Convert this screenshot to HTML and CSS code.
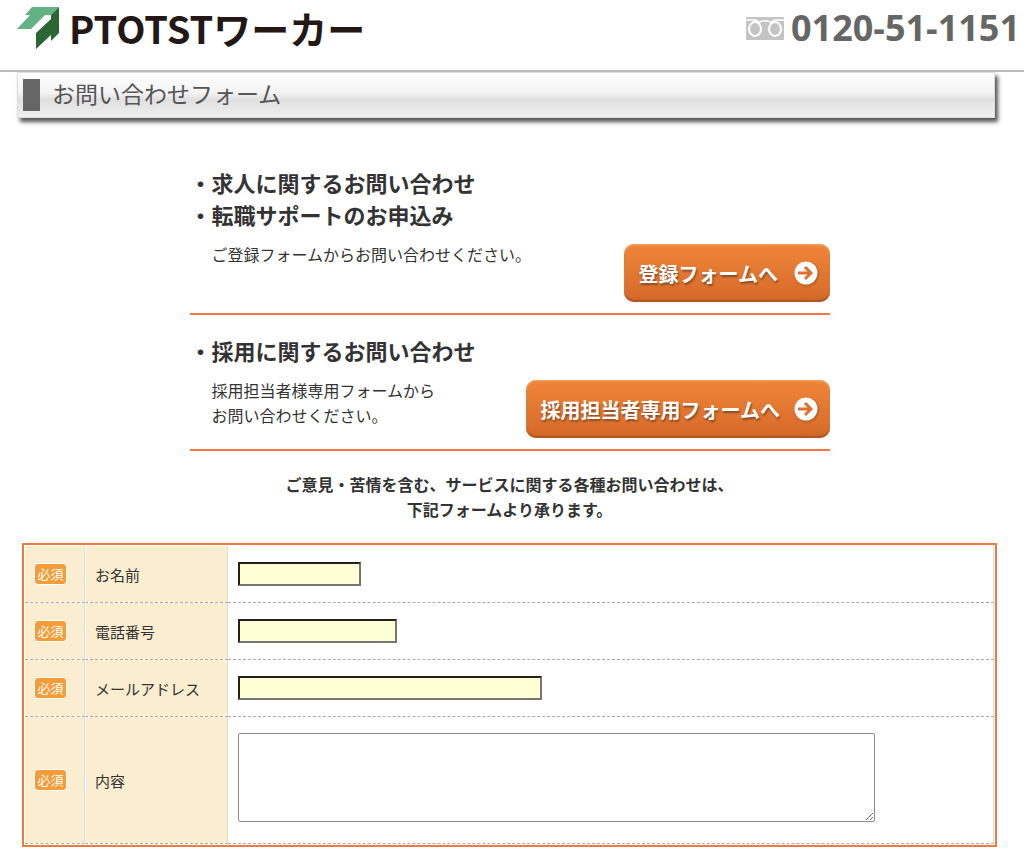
FILE: index.html
```
<!DOCTYPE html>
<html lang="ja">
<head>
    <meta charset="UTF-8">
    <meta name="viewport" content="width=device-width, initial-scale=1.0">
    <title>お問い合わせフォーム | PTOTSTワーカー</title>
    <link rel="stylesheet" href="styles.css">
</head>
<body>
    <header class="site-header">
        <a class="logo" href="#">
            <svg class="logo-mark" viewBox="0 0 43 43" aria-hidden="true">
                <path fill="#62b283" d="M0 22L13 8H8L15 0H42L34 8H28L14 22Z"/>
                <path fill="#2a6732" d="M42 0V26L34 34V28L19 42V26L34 12V8Z"/>
            </svg>
            <span>PTOTSTワーカー</span>
        </a>
        <div class="tel">
            <svg class="tel-mark" viewBox="0 0 38 23" aria-hidden="true">
                <rect width="38" height="23" fill="#c4c4c4"/>
                <g fill="none" stroke="#fff" stroke-width="2">
                    <ellipse cx="9" cy="12" rx="6" ry="7"/>
                    <ellipse cx="29" cy="12" rx="6" ry="7"/>
                    <path stroke-width="1.5" d="M0 3H8C10 3 12 4 13 6C15 3 23 3 25 6C26 4 28 3 30 3H38"/>
                </g>
            </svg>
            <span>0120-51-1151</span>
        </div>
    </header>

    <h1 class="page-title">お問い合わせフォーム</h1>

    <main>
        <div class="guide">
            <section class="guide-item">
                <h2>・求人に関するお問い合わせ<br>・転職サポートのお申込み</h2>
                <div class="guide-row">
                    <p>ご登録フォームからお問い合わせください。</p>
                    <a class="btn" href="#">
                        <span>登録フォームへ</span>
                        <svg viewBox="0 0 24 24" aria-hidden="true">
                            <circle cx="12" cy="12" r="11.5" fill="#fff"/>
                            <path fill="none" stroke="#dc7130" stroke-width="3" d="M4 12H17M11 6L17 12L11 18"/>
                        </svg>
                    </a>
                </div>
            </section>
            <section class="guide-item">
                <h2>・採用に関するお問い合わせ</h2>
                <div class="guide-row">
                    <p>採用担当者様専用フォームから<br>お問い合わせください。</p>
                    <a class="btn btn-wide" href="#">
                        <span>採用担当者専用フォームへ</span>
                        <svg viewBox="0 0 24 24" aria-hidden="true">
                            <circle cx="12" cy="12" r="11.5" fill="#fff"/>
                            <path fill="none" stroke="#dc7130" stroke-width="3" d="M4 12H17M11 6L17 12L11 18"/>
                        </svg>
                    </a>
                </div>
            </section>
        </div>

        <p class="lead">ご意見・苦情を含む、サービスに関する各種お問い合わせは、<br>下記フォームより承ります。</p>

        <form>
            <table class="form-table">
                <tr>
                    <td class="req"><span class="badge">必須</span></td>
                    <th><label for="name">お名前</label></th>
                    <td><input class="w-name" type="text" id="name"></td>
                </tr>
                <tr>
                    <td class="req"><span class="badge">必須</span></td>
                    <th><label for="tel">電話番号</label></th>
                    <td><input class="w-tel" type="tel" id="tel"></td>
                </tr>
                <tr>
                    <td class="req"><span class="badge">必須</span></td>
                    <th><label for="email">メールアドレス</label></th>
                    <td><input class="w-email" type="email" id="email"></td>
                </tr>
                <tr class="row-body">
                    <td class="req"><span class="badge">必須</span></td>
                    <th><label for="body">内容</label></th>
                    <td><textarea id="body"></textarea></td>
                </tr>
            </table>
        </form>
    </main>
</body>
</html>
```

FILE: styles.css
```
* {
    box-sizing: border-box;
}
body {
    margin: 0;
    background-color: #fff;
    color: #333;
    font-family: "Noto Sans CJK JP", sans-serif;
    font-size: 16px;
    line-height: 25px;
}
h1, h2, p {
    margin: 0;
}
.site-header {
    display: flex;
    justify-content: space-between;
    align-items: center;
    height: 72px;
    padding: 0 4px 14px 17px;
    border-bottom: 2px solid #bcbcbc;
}
.logo {
    display: flex;
    align-items: center;
    gap: 9px;
    color: #231815;
    font-size: 38px;
    font-weight: bold;
    line-height: 40px;
    text-decoration: none;
}
.logo span {
    padding-bottom: 1px;
}
.logo-mark {
    width: 43px;
    height: 43px;
}
.tel {
    display: flex;
    align-items: center;
    gap: 7px;
    color: #666;
    font-family: "Open Sans", sans-serif;
    font-size: 36px;
    font-weight: bold;
    line-height: 40px;
}
.tel-mark {
    width: 38px;
    height: 23px;
}
.page-title {
    display: flex;
    align-items: flex-start;
    gap: 12px;
    height: 46px;
    margin: 0 29px 0 17px;
    padding-left: 5px;
    border: 1px solid #ddd;
    background: linear-gradient(#fff, #f3f3f3 45%, #e0e0e0 60%, #efefef);
    box-shadow: 3px 4px 4px #555;
    color: #555;
    font-size: 23px;
    font-weight: normal;
    line-height: 41px;
}
.page-title::before {
    content: "";
    width: 17px;
    height: 32px;
    margin-top: 6px;
    background-color: #666;
}
main {
    padding: 48px 27px 4px 22px;
}
.guide {
    max-width: 640px;
    margin: 0 auto;
}
.guide-item {
    margin-bottom: 19px;
    padding-bottom: 11px;
    border-bottom: 2px solid #ee7a3e;
}
.guide-item h2 {
    margin-bottom: 12px;
    font-size: 22px;
    line-height: 32px;
}
.guide-row {
    display: flex;
    justify-content: space-between;
    align-items: flex-start;
    padding-left: 22px;
}
.btn {
    display: flex;
    justify-content: space-between;
    align-items: center;
    width: 206px;
    height: 58px;
    margin-top: 2px;
    padding: 0 12px 0 15px;
    border-radius: 10px;
    background: linear-gradient(#f08639, #d56829);
    box-shadow: inset 0 1px 2px #f6a868, inset 0 -2px 2px #a9521f;
    color: #fff;
    font-size: 20px;
    font-weight: bold;
    text-decoration: none;
    text-shadow: 1px 2px 2px #8a4a20;
}
.btn-wide {
    width: 304px;
}
.btn svg {
    width: 24px;
    height: 24px;
    filter: drop-shadow(1px 1px 1px #a9521f);
}
.lead {
    margin-bottom: 21px;
    padding-top: 2px;
    font-weight: bold;
    text-align: center;
}
.form-table {
    width: 100%;
    padding: 1px;
    border: 2px solid #ee7a3e;
    border-spacing: 0;
    font-size: 15px;
}
.form-table td, .form-table th {
    height: 57px;
    padding: 0 10px;
    border-right: 1px solid #ddd;
    border-bottom: 1px dashed #aaa;
    text-align: left;
    vertical-align: middle;
}
.form-table th {
    width: 143px;
    padding-left: 9px;
    border-left: 1px solid #fff;
    background-color: #fbedcf;
    background-clip: padding-box;
    font-weight: normal;
}
.form-table .req {
    width: 60px;
    padding-left: 9px;
    background-color: #fbedcf;
    background-clip: padding-box;
}
.form-table .row-body td, .form-table .row-body th {
    height: 127px;
}
.badge {
    display: block;
    width: 33px;
    border: 1px solid #fff;
    border-radius: 4px;
    background-color: #f39c38;
    color: #fff;
    font-size: 13px;
    line-height: 20px;
    text-align: center;
}
input {
    display: block;
    height: 24px;
    padding: 1px 2px;
    border: 2px inset #767676;
    background-color: #ffffd5;
    font-size: 15px;
}
.w-name {
    width: 123px;
}
.w-tel {
    width: 159px;
}
.w-email {
    width: 304px;
}
textarea {
    display: block;
    width: 637px;
    max-width: 100%;
    height: 89px;
    margin-bottom: 6px;
    border: 1px solid #8c8c8c;
    border-radius: 2px;
    font-size: 15px;
}
```
